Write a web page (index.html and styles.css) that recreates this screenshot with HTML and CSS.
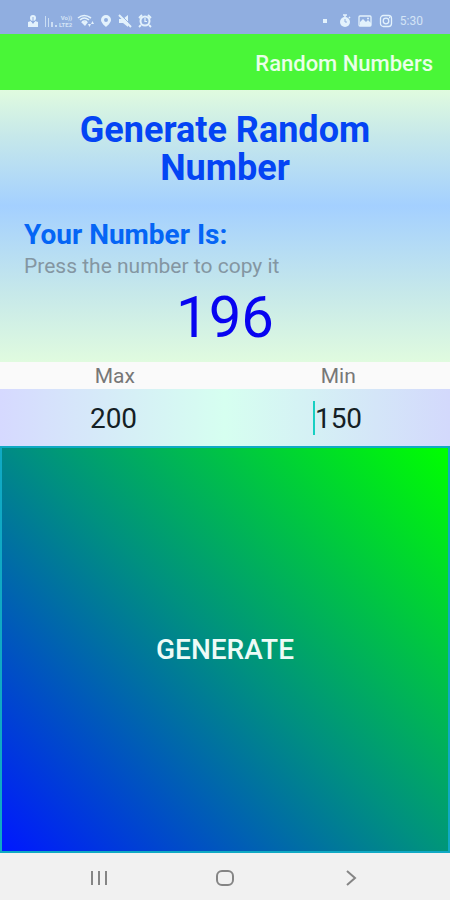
FILE: index.html
```html
<!DOCTYPE html>
<html lang="en">
<head>
<meta charset="utf-8">
<meta name="viewport" content="width=device-width, initial-scale=1">
<title>Random Numbers</title>
<link rel="stylesheet" href="styles.css">
</head>
<body>
<div class="status">
  <div class="status-group">
    <svg width="12" height="14" viewBox="0 0 12 14" fill="currentColor" aria-hidden="true"><circle cx="6" cy="4" r="3"/><path d="M1 8l3-1 2 3 2-3 3 1v5H1z"/><path d="M6 3v6M4 7l2 2 2-2" fill="none" stroke="#90aee0"/></svg>
    <svg class="dim" width="14" height="14" viewBox="0 0 14 14" fill="currentColor" aria-hidden="true"><path d="M1 2h1v11H1zM4 4h1v9H4zM7 8h2v5H7zM11 11h2v2h-2z"/></svg>
    <span class="network"><span>Vo))</span><span>LTE2</span></span>
    <svg width="18" height="14" viewBox="0 0 18 14" aria-hidden="true"><path d="M1 4q6-5 13 0M3 6q4-4 9 0M5 8q3-2 5 0" fill="none" stroke="currentColor" stroke-width="1.600"/><path d="M4 8h7l-3 4zM11 10h3l-1.500 3zM14 10l1.500-3 1.500 3z" fill="currentColor"/></svg>
    <svg width="12" height="14" viewBox="0 0 12 14" aria-hidden="true"><path fill="currentColor" fill-rule="evenodd" d="M6 1a5 5 0 0 0-5 5c0 3 5 7 5 7s5-4 5-7a5 5 0 0 0-5-5zm0 3a2 2 0 1 1 0 4 2 2 0 0 1 0-4z"/></svg>
    <svg class="mute" width="14" height="14" viewBox="0 0 14 14" aria-hidden="true"><path fill="currentColor" d="M1 5h4l5-4v12L5 9H1z"/><path d="M2 0l12 12" stroke="#90aee0"/><path d="M1 1l12 12" stroke="currentColor" stroke-width="2"/></svg>
    <svg width="14" height="14" viewBox="0 0 14 14" fill="none" stroke="currentColor" aria-hidden="true"><circle cx="7" cy="7" r="4.500" stroke-width="2"/><path d="M7 4v3.500h2" stroke-width="1.200"/><path d="M1 4l3-3M13 4l-3-3M3 11l-2 2M11 11l2 2" stroke-width="1.800"/></svg>
  </div>
  <div class="status-group right">
    <span class="dot"></span>
    <svg width="12" height="14" viewBox="0 0 12 14" aria-hidden="true"><circle cx="6" cy="8" r="5" fill="currentColor"/><path d="M4 1h4M6 1v3M10 3l1 1" stroke="currentColor" stroke-width="1.600"/><path d="M6 5v3h2" fill="none" stroke="#90aee0"/></svg>
    <svg width="14" height="14" viewBox="0 0 14 14" aria-hidden="true"><rect x="1" y="2" width="12" height="10" rx="1" fill="none" stroke="currentColor" stroke-width="1.300"/><path d="M2 8l3-3 3 3 2-2 3 3v3H2z" fill="currentColor"/><circle cx="10" cy="4.500" r="1" fill="currentColor"/></svg>
    <svg width="14" height="14" viewBox="0 0 14 14" fill="none" stroke="currentColor" stroke-width="1.300" aria-hidden="true"><rect x="1.500" y="1.500" width="11" height="11" rx="3"/><circle cx="7" cy="7" r="2.800"/><path d="M10 3.500h1"/></svg>
    <span class="time">5:30</span>
  </div>
</div>
<header class="bar">Random Numbers</header>
<main>
  <h1>Generate Random Number</h1>
  <section class="result">
    <h2>Your Number Is:</h2>
    <p>Press the number to copy it</p>
    <button class="number" type="button">196</button>
  </section>
  <form>
    <div class="labels"><label for="max">Max</label><label for="min">Min</label></div>
    <div class="fields">
      <div class="field"><input id="max" type="text" inputmode="numeric" value="200"></div>
      <div class="field"><input id="min" type="text" inputmode="numeric" value="150"><span class="caret"></span></div>
    </div>
    <button class="generate" type="button">GENERATE</button>
  </form>
</main>
<nav>
  <button type="button" aria-label="Recent apps"><svg width="20" height="20" viewBox="0 0 20 20"><path d="M3 3v14M10 3v14M17 3v14"/></svg></button>
  <button type="button" aria-label="Home"><svg width="20" height="20" viewBox="0 0 20 20"><rect x="2" y="3" width="16" height="14" rx="5"/></svg></button>
  <button type="button" aria-label="Back"><svg width="20" height="20" viewBox="0 0 20 20"><path d="M6 3l8 7-8 7"/></svg></button>
</nav>
</body>
</html>
```
FILE: styles.css
```css
* { box-sizing: border-box; }
body {
  margin: 0;
  min-height: 100vh;
  display: flex;
  flex-direction: column;
  font-family: Roboto, "Liberation Sans", sans-serif;
  background: #fafafa;
}
button, input { font: inherit; border: 0; background: none; padding: 0; }
h1, h2, p { margin: 0; }
.status {
  height: 34px;
  display: flex;
  justify-content: space-between;
  align-items: center;
  padding: 7px 27px 0;
  background: #90aee0;
  color: #e3f2fc;
}
.status-group { display: flex; align-items: center; gap: 5px; }
.status-group.right { gap: 7px; }
.status svg { display: block; }
.dim { opacity: .7; margin-right: -4px; }
.mute { margin: 0 1px; }
.network {
  display: flex;
  flex-direction: column;
  align-items: flex-end;
  font-size: 6px;
  line-height: 7px;
  font-weight: 700;
  opacity: .8;
}
.dot { width: 4px; height: 4px; background: currentColor; margin-right: 5px; }
.time { font-size: 12px; line-height: 14px; opacity: .8; }
.bar {
  height: 56px;
  display: flex;
  align-items: center;
  justify-content: flex-end;
  padding: 2px 17px 0;
  background: #49f637;
  color: #e9ffe9;
  font-size: 22px;
  font-weight: 500;
}
main, form { flex: 1; display: flex; flex-direction: column; }
h1 {
  height: 116px;
  padding: 21px 60px 0;
  text-align: center;
  font-size: 36px;
  line-height: 38px;
  color: #0444f4;
  background: linear-gradient(#e0fbdf, #c6e8ea 40%, #a4d0ff);
}
.result {
  height: 156px;
  display: flex;
  flex-direction: column;
  padding: 12px 24px 0;
  background: linear-gradient(#a4d0ff, #c6e8ea 55%, #e0fbdf);
}
h2 { font-size: 28px; line-height: 34px; color: #0565f5; }
.result p { font-size: 21px; line-height: 28px; color: #8496a2; }
.number { align-self: center; font-size: 58px; line-height: 74px; color: #0804f0; }
.labels, .fields { display: grid; grid-template-columns: 1fr 1fr; }
.labels { height: 27px; padding-left: 3px; text-align: center; font-size: 21px; line-height: 28px; color: #777; }
.fields { background: linear-gradient(90deg, #d6d9ff, #d6fff0 50%, #d3d9fc); }
.field { position: relative; height: 57px; }
.field input {
  width: 100%;
  height: 100%;
  padding: 2px 0 0 2px;
  text-align: center;
  font-size: 28px;
  color: #151f25;
  outline: 0;
}
.caret {
  position: absolute;
  left: calc(50% - 25px);
  top: 12px;
  width: 2px;
  height: 34px;
  background: #18cfc2;
}
.generate {
  flex: 1;
  border: 2px solid #10a9c4;
  background: linear-gradient(45deg, #0018ff, #009080 50%, #00ff00);
  color: #eefbf7;
  font-size: 28px;
  font-weight: 500;
}
nav {
  height: 47px;
  display: flex;
  justify-content: center;
  align-items: center;
  gap: 106px;
  padding-top: 2px;
  background: #f1f1f1;
}
nav button { height: 20px; }
nav svg { display: block; fill: none; stroke: #858585; stroke-width: 2; }
```
